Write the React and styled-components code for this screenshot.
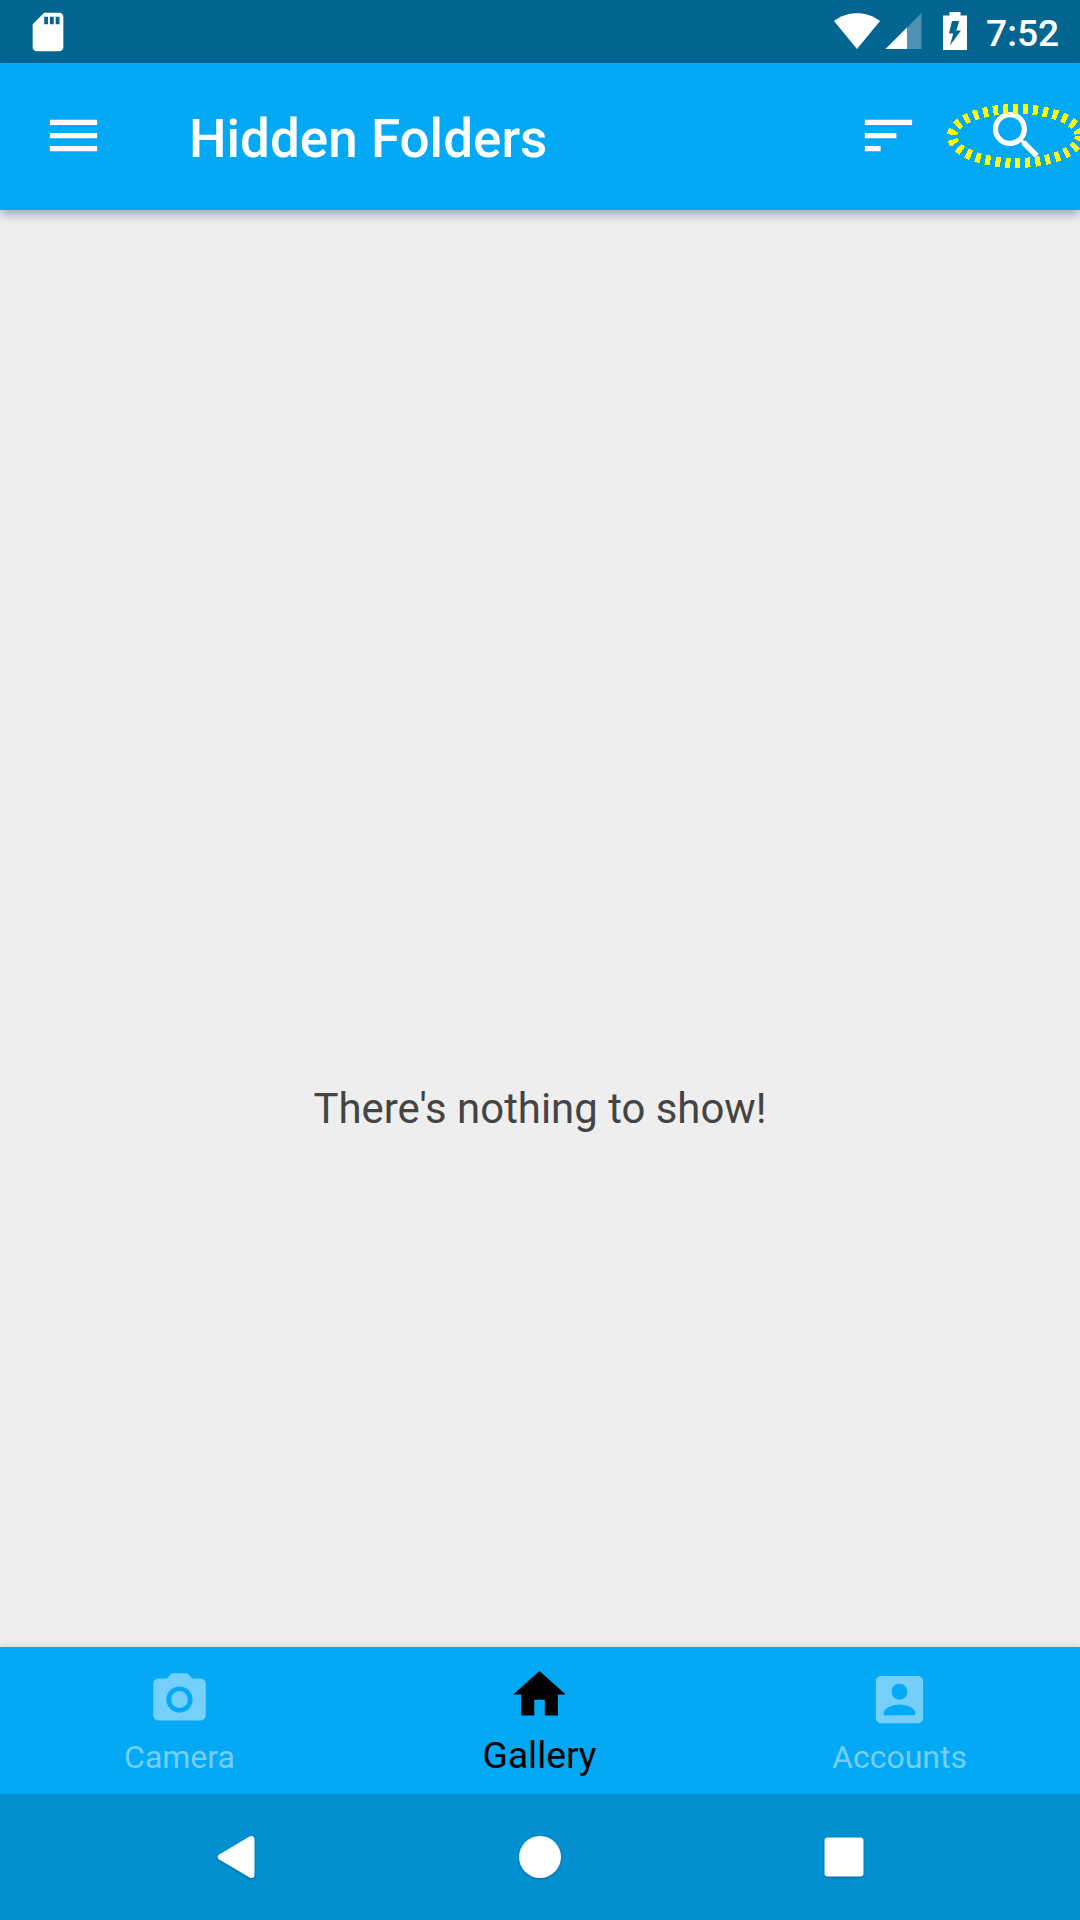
import React from "react";
import styled, { createGlobalStyle } from "styled-components";

const GlobalStyle = createGlobalStyle`
  * { box-sizing: border-box; }
  body { margin: 0; }
`;

const Screen = styled.div`
  width: 1080px;
  height: 1920px;
  display: flex;
  flex-direction: column;
  overflow: hidden;
  background: #eeeeee;
  font-family: Roboto, "Liberation Sans", sans-serif;
`;

const StatusBar = styled.header`
  flex: 0 0 63px;
  display: flex;
  align-items: center;
  justify-content: space-between;
  padding: 0 21px 0 24.5px;
  background: #026592;
  color: #fff;
`;

const StatusGroup = styled.div`
  display: flex;
  align-items: center;
`;

const Clock = styled.time`
  width: 73px;
  margin-left: 11px;
  padding-top: 3px;
  font-size: 37.2px;
  line-height: 44px;
  font-weight: 500;
  white-space: nowrap;
`;

const Glyph = styled.svg`
  display: block;
  flex: none;
  width: ${(p) => p.$w || 63}px;
  height: ${(p) => p.$h || 63}px;
  fill: currentColor;
`;

const AppBar = styled.nav`
  position: relative;
  z-index: 1;
  flex: 0 0 147px;
  display: flex;
  align-items: center;
  padding: 0 0 2px 41.5px;
  background: #03a9f4;
  color: #fff;
  box-shadow: 0 6px 9px -1px rgba(0, 0, 0, 0.28);
`;

const Title = styled.h1`
  flex: 1;
  margin: 0 0 0 84.5px;
  padding-top: 7px;
  font-size: 53px;
  line-height: 62px;
  font-weight: 500;
`;

const ActionButton = styled.button`
  position: relative;
  display: flex;
  justify-content: center;
  width: ${(p) => p.$w}px;
  padding: 0 0 0 ${(p) => p.$inset || 0}px;
  border: 0;
  background: none;
  color: inherit;
`;

const FocusRing = styled.svg`
  position: absolute;
  left: 0;
  top: 0;
  width: 140px;
  height: 64px;
  fill: none;
  stroke: #ffff00;
  stroke-width: 10;
  stroke-dasharray: 5 5;
`;

const Content = styled.main`
  flex: 1;
  display: flex;
  align-items: center;
  justify-content: center;
  padding-top: 360px;
`;

const EmptyMessage = styled.p`
  margin: 0;
  font-size: 41.9px;
  line-height: 50px;
  color: #444;
`;

const TabBar = styled.nav`
  flex: 0 0 147px;
  display: grid;
  grid-template-columns: repeat(3, 1fr);
  background: #03a9f4;
  box-shadow: 0 0 9px rgba(0, 0, 0, 0.1);
`;

const Tab = styled.a`
  display: flex;
  flex-direction: column;
  align-items: center;
  padding: ${(p) => (p.$active ? 16 : 21)}px 1px 0 0;
  color: ${(p) => (p.$active ? "#000" : "#74cffa")};
`;

const TabLabel = styled.span`
  margin-top: 7px;
  font-size: ${(p) => (p.$active ? 37.2 : 32)}px;
  line-height: ${(p) => (p.$active ? 44 : 38)}px;
`;

const SystemNav = styled.footer`
  flex: 0 0 126px;
  display: flex;
  align-items: center;
  justify-content: space-between;
  padding: 0 213px;
  background: #0290d0;
  color: #fff;
  z-index: 1;
`;

const NavKey = styled(Glyph)`
  filter: drop-shadow(0 1px 1px rgba(0, 0, 0, 0.28));
`;

const tabs = [
  {
    label: "Camera",
    path: (
      <>
        <circle cx="12" cy="12" r="3.2" />
        <path d="M9 2 7.17 4H4c-1.1 0-2 .9-2 2v12c0 1.1.9 2 2 2h16c1.1 0 2-.9 2-2V6c0-1.1-.9-2-2-2h-3.17L15 2H9zm3 15c-2.76 0-5-2.24-5-5s2.24-5 5-5 5 2.24 5 5-2.24 5-5 5z" />
      </>
    ),
  },
  { label: "Gallery", active: true, path: <path d="M10 20v-6h4v6h5v-8h3L12 3 2 12h3v8z" /> },
  {
    label: "Accounts",
    path: (
      <path d="M3 5v14c0 1.1.89 2 2 2h14c1.1 0 2-.9 2-2V5c0-1.1-.9-2-2-2H5c-1.11 0-2 .9-2 2zm12 4c0 1.66-1.34 3-3 3s-3-1.34-3-3 1.34-3 3-3 3 1.34 3 3zm-9 8c0-2 4-3.1 6-3.1s6 1.1 6 3.1v1H6v-1z" />
    ),
  },
];

export default function App() {
  return (
    <>
      <GlobalStyle />
      <Screen>
        <StatusBar>
          <Glyph $w={46} $h={46} viewBox="0 0 24 24">
            <path d="M18 2h-8L4.02 8 4 20c0 1.1.9 2 2 2h12c1.1 0 2-.9 2-2V4c0-1.1-.9-2-2-2zm-6 6h-2V4h2v4zm3 0h-2V4h2v4zm3 0h-2V4h2v4z" />
          </Glyph>
          <StatusGroup>
            <Glyph $w={141} $h={63} viewBox="0 0 141 63">
              <path d="M0 21C13 10.500 33 10.500 46 21L23 49Z" />
              <path d="M87.500 13V49H51.500Z" opacity=".3" />
              <path d="M73 27.500V49H51.500Z" />
              <path
                fillRule="evenodd"
                d="M115.500 12H126.500V15.500H133V50H109V15.500H115.500ZM118 21L115 33.500H119.200L116 45.500L127 30.500H122.300L125.200 21Z"
              />
            </Glyph>
            <Clock>7:52</Clock>
          </StatusGroup>
        </StatusBar>

        <AppBar>
          <Glyph viewBox="0 0 24 24">
            <path d="M3 18h18v-2H3v2zm0-5h18v-2H3v2zm0-7v2h18V6H3z" />
          </Glyph>
          <Title>Hidden Folders</Title>
          <ActionButton $w={115} aria-label="Sort">
            <Glyph viewBox="0 0 24 24">
              <path d="M3 18h6v-2H3v2zM3 6v2h18V6H3zm0 7h12v-2H3v2z" />
            </Glyph>
          </ActionButton>
          <ActionButton $w={134} $inset={6} aria-label="Search">
            <Glyph viewBox="0 0 24 24">
              <path d="M15.500 14h-.79l-.28-.27C15.410 12.590 16 11.110 16 9.500 16 5.910 13.090 3 9.500 3S3 5.910 3 9.500 5.910 16 9.500 16c1.610 0 3.090-.59 4.230-1.570l.27.28v.79l5 4.990L20.490 19l-4.990-5zm-6 0C7.010 14 5 11.990 5 9.500S7.010 5 9.500 5 14 7.010 14 9.500 11.990 14 9.500 14z" />
            </Glyph>
            <FocusRing viewBox="0 0 140 64" shapeRendering="crispEdges">
              <ellipse cx="70" cy="32" rx="64" ry="27" />
            </FocusRing>
          </ActionButton>
        </AppBar>

        <Content>
          <EmptyMessage>There's nothing to show!</EmptyMessage>
        </Content>

        <TabBar>
          {tabs.map((t) => (
            <Tab key={t.label} $active={t.active}>
              <Glyph viewBox="0 0 24 24">{t.path}</Glyph>
              <TabLabel $active={t.active}>{t.label}</TabLabel>
            </Tab>
          ))}
        </TabBar>

        <SystemNav>
          <NavKey $w={46} $h={46} viewBox="0 0 46 46">
            <path d="M6.200 20.500 36.500 2.600Q41.500 0.500 41.500 6V40Q41.500 45.500 36.500 43.400L6.200 25.500Q3 23 6.200 20.500Z" />
          </NavKey>
          <NavKey $w={46} $h={46} viewBox="0 0 46 46">
            <circle cx="23" cy="23" r="21" />
          </NavKey>
          <NavKey $w={46} $h={46} viewBox="0 0 46 46">
            <rect x="3.500" y="3.500" width="39" height="39" rx="3" />
          </NavKey>
        </SystemNav>
      </Screen>
    </>
  );
}
